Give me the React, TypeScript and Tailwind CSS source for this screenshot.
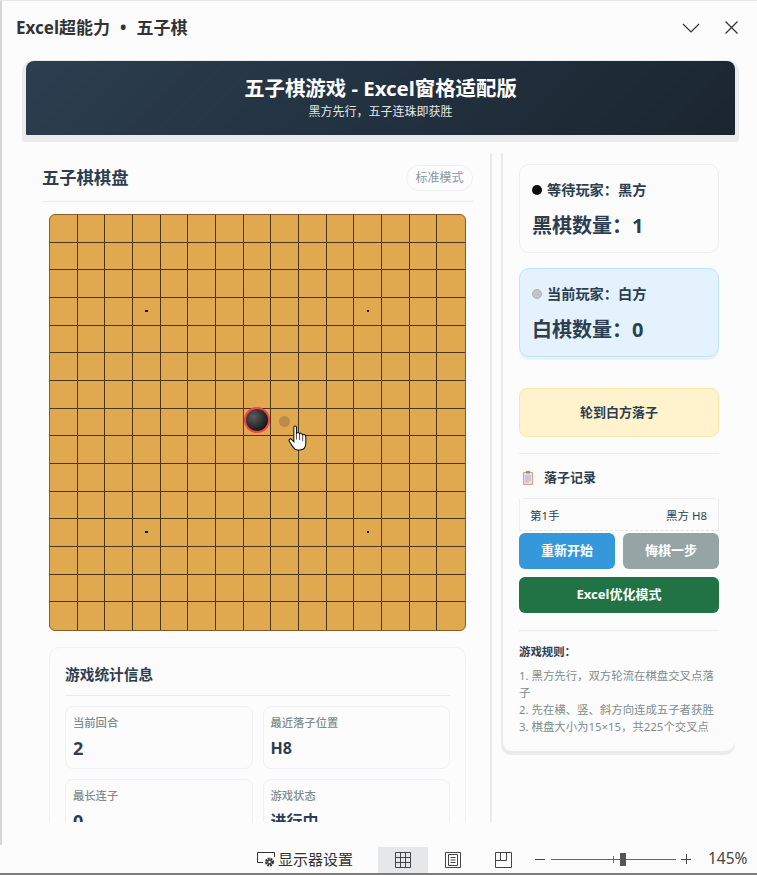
const cells = Array.from({ length: 225 }, (_, i) => i);

const PlayerCard = ({ active, label, count }: { active?: boolean; label: string; count: string }) => (
  <div
    className={`h-[89px] rounded-[10px] border px-[12px] pt-[14px] ${
      active
        ? "border-[#bfe3fc] bg-[#e3f2fd] shadow-[0_3px_0_#e6f3fd]"
        : "border-[#eceef1] bg-[#fcfcfc]"
    }`}
  >
    <div className="flex h-[21px] items-center gap-[5px] text-[14.2px] font-semibold text-[#2c3e50]">
      <span
        className={`size-[10px] rounded-full ${active ? "border border-[#a9b5ba] bg-[#c4c4c4]" : "bg-[#0c0c0c]"}`}
      />
      {label}
    </div>
    <div className="mt-[11px] h-[30px] text-[20px] leading-[30px] font-bold text-[#2c3e50]">{count}</div>
  </div>
);

const StatCell = ({ label, value, big }: { label: string; value: string; big?: boolean }) => (
  <div className="h-[63px] rounded-[8px] border border-[#eef1f5] px-[7px] pt-[8px]">
    <div className="text-[11.3px] leading-[16px] font-medium text-[#7f8c8d]">{label}</div>
    <div className={`mt-[5px] leading-[24px] font-bold text-[#2c3e50] ${big ? "text-[16px]" : "text-[18px]"}`}>
      {value}
    </div>
  </div>
);

export default function App() {
  return (
    <div className="flex h-[875px] w-[757px] flex-col overflow-hidden border-t border-[#e6e6e6] bg-[#fcfcfc] [font-family:'Noto_Sans','Noto_Sans_CJK_SC',sans-serif]">
      <div className="flex min-h-0 flex-1 flex-col border-l-2 border-[#d6d6d6]">
        {/* title bar */}
        <div className="flex h-[55px] shrink-0 items-center justify-between pr-[19px] pb-[2px] pl-[14px]">
          <span className="text-[17px] font-bold text-[#333333]">
            Excel超能力<span className="mx-[10px]">•</span>五子棋
          </span>
          <div className="flex items-center gap-[25px]">
            <svg width="18" height="10" viewBox="0 0 18 10" fill="none" stroke="#333" strokeWidth="1.2">
              <path d="M1 1l8 8 8-8" />
            </svg>
            <svg width="13" height="13" viewBox="0 0 13 13" fill="none" stroke="#333" strokeWidth="1.2">
              <path d="M.5.5l12 12M12.5.5l-12 12" />
            </svg>
          </div>
        </div>

        <div className="mb-[23px] min-h-0 flex-1 overflow-hidden pt-[5px] pl-[24px]">
          {/* banner */}
          <div className="flex h-[74px] w-[709px] flex-col items-center rounded-t-[8px] rounded-b-[1px] bg-[linear-gradient(135deg,#2c3e50,#1a252f)] pt-[12px] text-white shadow-[0_3px_0_4px_#e9ebed]">
            <div className="text-[20.4px] leading-[30px] font-bold">五子棋游戏 - Excel窗格适配版</div>
            <div className="text-[12px] leading-[18px] text-[#e3e7ea]">黑方先行，五子连珠即获胜</div>
          </div>

          <div className="mt-[18px] flex items-start gap-[9px]">
            {/* left column */}
            <div className="w-[466px] shrink-0 border-r-2 border-[#e9ebed] pt-[12px] pr-[17px] pl-[16px]">
              <div className="flex items-center justify-between border-b border-[#e9ebed] pb-[10px]">
                <span className="text-[17.3px] font-bold text-[#2c3e50]">五子棋棋盘</span>
                <span className="flex h-[26px] w-[67px] items-center justify-center rounded-full border border-[#ebf0f5] text-[12px] text-[#8a979f]">
                  标准模式
                </span>
              </div>

              <div className="relative mt-[12px] ml-[7px] grid h-[417px] w-[417px] grid-cols-15 grid-rows-15 overflow-hidden rounded-[6px] border border-[#8b5a2b] bg-[#e0a84f]">
                {cells.map((i) => (
                  <div
                    key={i}
                    className={`border-[#4a3719] ${(i + 1) % 15 === 0 ? "" : "border-r"} ${i >= 210 ? "" : "border-b"}`}
                  />
                ))}
                <span className="absolute top-[95px] left-[95px] h-[2px] w-[3px] bg-[#111]" />
                <span className="absolute top-[95px] left-[317px] h-[2px] w-[2px] bg-[#111]" />
                <span className="absolute top-[316px] left-[95px] h-[2px] w-[3px] bg-[#111]" />
                <span className="absolute top-[316px] left-[317px] h-[2px] w-[2px] bg-[#111]" />
                <span className="absolute top-[192px] left-[194px] size-[26px] rounded-full border-2 border-[#f4434a] bg-[radial-gradient(circle_at_35%_35%,#5c5c5c,#161616_75%)]" />
                <span className="absolute top-[201px] left-[229px] size-[11px] rounded-full bg-[#bd8b48]" />
                {/* mouse cursor */}
                <svg className="absolute top-[210px] left-[238px]" width="19" height="26" viewBox="0 0 18 25" stroke="#111" strokeWidth="1" fill="#fff">
                  <path d="M5.5 2C5.5.5 8 .5 8 2v6c1-1 2.5-1 3 .5 1-1 2.5-.5 3 1 1-1 3 0 3 1.500V17c0 4-2 7-6 7H9c-2 0-3.500-1.500-4.500-3L1 15.500c-.7-1.500 1-3 2.500-1.500l2 2z" />
                  <path d="M8 8v6M11 8.500v6M14 9.500v6" fill="none" strokeWidth="0.7" />
                </svg>
              </div>

              <div className="mt-[16px] ml-[7px] w-[417px] rounded-[10px] border border-[#eef1f5] px-[15px] pt-[14px]">
                <div className="border-b border-[#e9ebed] pb-[9px] text-[14.7px] leading-[24px] font-bold text-[#2c3e50]">
                  游戏统计信息
                </div>
                <div className="mt-[10px] grid grid-cols-2 gap-[10px]">
                  <StatCell label="当前回合" value="2" />
                  <StatCell label="最近落子位置" value="H8" big />
                  <StatCell label="最长连子" value="0" />
                  <StatCell label="游戏状态" value="进行中" big />
                </div>
              </div>
            </div>

            {/* right column */}
            <div className="h-[598px] w-[234px] shrink-0 rounded-b-[10px] border-l-2 border-[#e9ebed] pt-[11px] pr-[16px] pl-[16px] shadow-[0_4px_0_#e9ebed]">
              <PlayerCard label="等待玩家：黑方" count="黑棋数量：1" />
              <div className="mt-[15px]">
                <PlayerCard active label="当前玩家：白方" count="白棋数量：0" />
              </div>
              <div className="mt-[31px] flex h-[49px] items-center justify-center rounded-[8px] border border-[#ffe5a3] bg-[#fff3cd] text-[13px] font-bold text-[#2c3e50]">
                轮到白方落子
              </div>
              <div className="mt-[16px] border-t border-[#e9ebed]" />
              <div className="flex h-[44px] items-center gap-[6px] pt-[4px] pl-[4px] text-[13px] font-semibold text-[#2c3e50]">
                <svg width="10" height="14" viewBox="0 0 10 14">
                  <rect x="0" y="1" width="10" height="13" rx="1" fill="#d9a27a" />
                  <rect x="1" y="2" width="8" height="11" fill="#e6e0ee" />
                  <rect x="3" y="0" width="4" height="2.500" fill="#8d8d96" />
                  <path d="M2 5h6M2 7h6M2 9h6M2 11h4" stroke="#a79fb8" strokeWidth="0.8" />
                </svg>
                <span className="ml-[5px]">落子记录</span>
              </div>
              <div className="mx-[4px] border-t border-[#e9ebed]" />
              <div className="flex h-[32px] items-center justify-between border-x border-b border-b-[#e3e5e8] border-x-[#eceef1] pt-[2px] pr-[11px] pl-[10px] text-[11.5px] text-[#2c3e50] [border-bottom-style:dashed]">
                <span>第1手</span>
                <span>黑方 H8</span>
              </div>
              <div className="mt-[2px] grid grid-cols-2 gap-[8px]">
                <button className="h-[36px] rounded-[6px] bg-[#3498db] text-[13px] font-bold text-white">重新开始</button>
                <button className="h-[36px] rounded-[6px] bg-[#95a5a6] text-[13px] font-bold text-white">悔棋一步</button>
              </div>
              <button className="mt-[8px] h-[36px] w-full rounded-[6px] bg-[#217346] text-[13px] font-bold text-white">
                Excel优化模式
              </button>
              <div className="mt-[17px] border-t border-[#e9ebed]" />
              <div className="mt-[13px] text-[11.4px] leading-[16px] font-bold text-[#2c3e50]">游戏规则：</div>
              <div className="mt-[7px] text-[11.4px] leading-[17px] text-[#7f8c8d]">
                <div>1. 黑方先行，双方轮流在棋盘交叉点落子</div>
                <div>2. 先在横、竖、斜方向连成五子者获胜</div>
                <div>3. 棋盘大小为15×15，共225个交叉点</div>
              </div>
            </div>
          </div>
        </div>
      </div>

      {/* status bar */}
      <div className="flex h-[30px] shrink-0 items-start border-b-2 border-[#7b7b7b] pl-[257px] text-[#333333]">
        <div className="flex h-[28px] w-[96px] items-center gap-[2px] text-[15px]">
          <svg width="19" height="18" viewBox="0 0 19 18" fill="none" stroke="#333" strokeWidth="1">
            <path d="M6 12.500H.5v-10h17v4.500" />
            <circle cx="12.500" cy="12" r="3.200" strokeWidth="2.600" strokeDasharray="1.800 0.800" />
            <circle cx="12.500" cy="12" r="1.800" strokeWidth="1.200" />
          </svg>
          <span>显示器设置</span>
        </div>
        <div className="mt-[2px] ml-[25px] flex h-[26px] w-[50px] items-center justify-center bg-[#e6e7e9]">
          <svg width="16" height="16" viewBox="0 0 16 16" fill="none" stroke="#444" strokeWidth="1">
            <path d="M.5.5h15v15H.5zM5.500.5v15M10.500.5v15M.5 5.500h15M.5 10.500h15" />
          </svg>
        </div>
        <div className="mt-[2px] flex h-[26px] w-[50px] items-center justify-center">
          <svg width="16" height="16" viewBox="0 0 16 16" fill="none" stroke="#444" strokeWidth="1">
            <path d="M.5.5h15v15H.5zM3.500 2.500h9v11h-9zM5.500 5.500h5M5.500 8h5M5.500 10.500h5" />
          </svg>
        </div>
        <div className="mt-[2px] flex h-[26px] w-[50px] items-center justify-center">
          <svg width="17" height="16" viewBox="0 0 17 16" fill="none" stroke="#444" strokeWidth="1">
            <path d="M.5.5h16v15H.5zM.5 8.500h11V.5M5.500.5v8" />
          </svg>
        </div>
        <div className="flex h-[28px] items-center">
          <span className="ml-[7px] h-px w-[10px] bg-[#444]" />
          <div className="relative ml-[6px] h-px w-[125px] bg-[#666]">
            <span className="absolute top-[-3px] left-[62px] h-[7px] w-px bg-[#666]" />
            <span className="absolute top-[-6px] left-[69px] h-[13px] w-[6px] bg-[#555]" />
          </div>
          <svg className="ml-[5px]" width="10" height="10" viewBox="0 0 10 10" stroke="#444" strokeWidth="1">
            <path d="M0 5.500h10M5.500 0v10" />
          </svg>
          <span className="ml-[17px] text-[15.500px] text-[#444]">145%</span>
        </div>
      </div>
    </div>
  );
}
